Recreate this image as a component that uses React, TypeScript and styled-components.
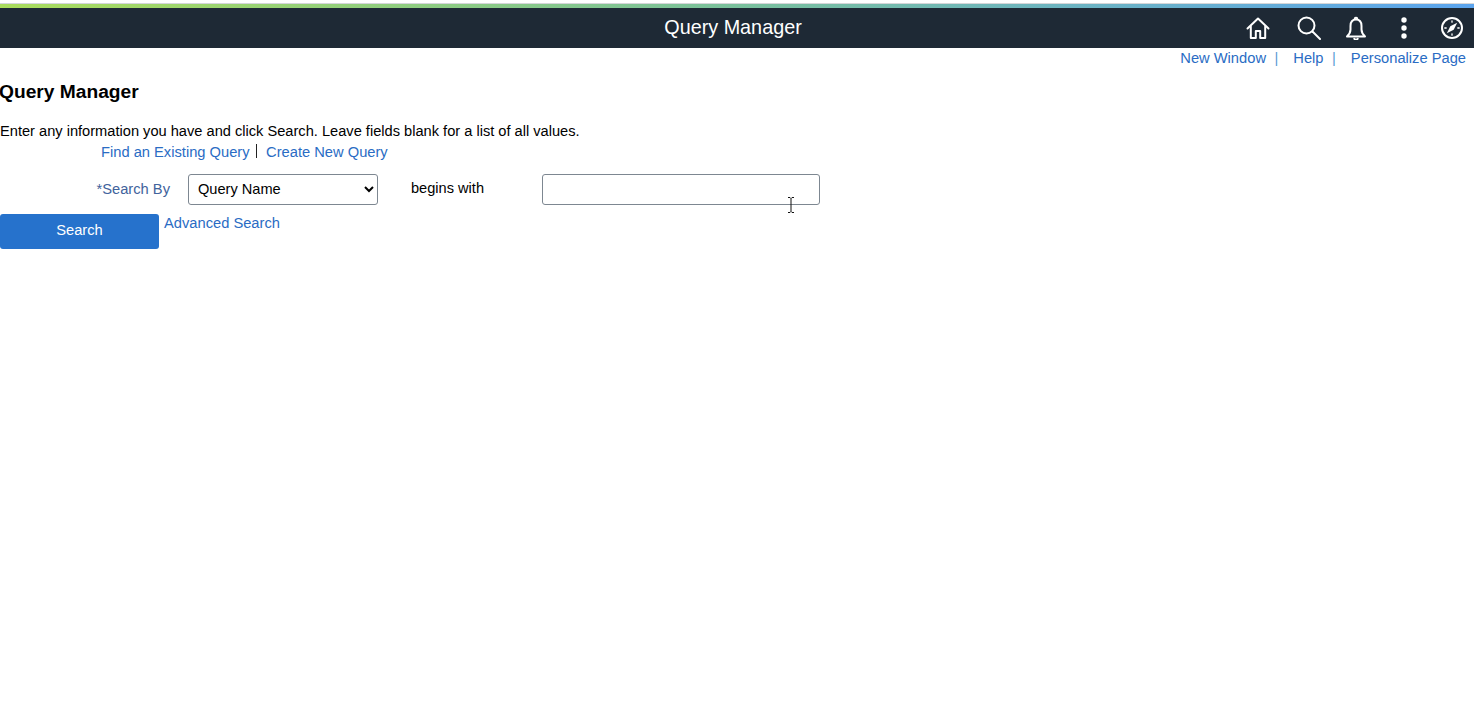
import React from "react";
import styled, { createGlobalStyle } from "styled-components";

const GlobalStyle = createGlobalStyle`
  html, body {
    margin: 0;
    padding: 0;
    background: #ffffff;
    font-family: "Liberation Sans", Arial, sans-serif;
    color: #000000;
  }
`;

const linkBlue = "#2a6cc4";

const Page = styled.div`
  position: relative;
  width: 1474px;
  height: 713px;
  overflow: hidden;
`;

const TopStrip = styled.div`
  height: 8px;
  box-sizing: border-box;
  padding-top: 3px;
`;

const StripLine = styled.div`
  height: 5px;
  box-sizing: border-box;
  border-top: 1px solid #d4d6d8;
  background: linear-gradient(90deg, #a9dc5c 0%, #79c09c 50%, #5ba4ee 100%);
  background-clip: padding-box;
`;

const Banner = styled.header`
  height: 40px;
  box-sizing: border-box;
  padding-right: 8px;
  display: grid;
  grid-template-columns: 1fr auto 1fr;
  align-items: center;
  background: #1e2935;
`;

const BannerTitle = styled.div`
  grid-column: 2;
  color: #ffffff;
  font-size: 19.8px;
  line-height: 38px;
  height: 40px;
`;

const BannerIcons = styled.div`
  grid-column: 3;
  justify-self: end;
  display: flex;
  align-items: center;
  margin-right: 2px;
`;

const IconSlot = styled.span<{ $gap?: number }>`
  margin-left: ${(p) => p.$gap ?? 0}px;
  height: 40px;
  display: flex;
  align-items: center;
`;

const UtilityLinks = styled.nav`
  display: flex;
  justify-content: flex-end;
  padding-right: 8px;
  height: 20px;
  font-size: 14.7px;
  line-height: 20px;
`;

const UtilityLink = styled.a<{ $gap?: number }>`
  color: ${linkBlue};
  margin-left: ${(p) => p.$gap ?? 0}px;
`;

const UtilitySep = styled.span`
  color: #5b9bd5;
  margin-left: 8.5px;
`;

const Heading = styled.h1`
  margin: 12px 0 0 -1px;
  font-size: 19.2px;
  line-height: 23px;
  font-weight: 700;
`;

const Instructions = styled.p`
  margin: 18px 0 0;
  font-size: 14.63px;
  line-height: 20px;
`;

const TabLinks = styled.div`
  display: flex;
  align-items: center;
  margin-top: 1px;
  padding-left: 101px;
  font-size: 14.7px;
  line-height: 20px;
`;

const QueryLink = styled.a`
  color: ${linkBlue};
`;

const TabSep = styled.span`
  width: 1.5px;
  height: 14px;
  margin: -2px 9px 0 6px;
  background: #222222;
`;

const SearchRow = styled.div`
  display: flex;
  align-items: center;
  margin-top: 12px;
  height: 31px;
`;

const SearchByLabel = styled.label`
  width: 170px;
  box-sizing: border-box;
  text-align: right;
  color: #41639c;
  font-size: 14.7px;
  line-height: 31px;
  height: 31px;
`;

const QuerySelect = styled.select`
  width: 190px;
  height: 31px;
  margin-left: 18px;
  padding: 0 0 2px 5px;
  box-sizing: border-box;
  border: 1px solid #7d8791;
  border-radius: 3px;
  background: #ffffff;
  color: #000000;
  font-family: inherit;
  font-size: 14.6px;
`;

const Operator = styled.span`
  width: 131px;
  height: 31px;
  margin-left: 33px;
  font-size: 14.6px;
  line-height: 29px;
`;

const SearchInput = styled.input`
  width: 278px;
  height: 31px;
  box-sizing: border-box;
  border: 1px solid #7d8791;
  border-radius: 3px;
  background: #ffffff;
`;

const ActionRow = styled.div`
  display: flex;
  align-items: flex-start;
  margin-top: 9px;
`;

const SearchButton = styled.button`
  width: 159px;
  height: 35px;
  padding: 0 0 4px;
  border: none;
  border-radius: 3px;
  background: #2672cc;
  color: #ffffff;
  font-family: inherit;
  font-size: 14.7px;
`;

const AdvancedLink = styled.a`
  margin-left: 5px;
  color: ${linkBlue};
  font-size: 14.7px;
  line-height: 18px;
`;

const TextCursor = styled.svg`
  position: absolute;
  left: 787px;
  top: 197px;
`;

const iconProps = {
  fill: "none",
  stroke: "#ffffff",
  strokeLinecap: "round" as const,
  strokeLinejoin: "round" as const,
};

export default function App() {
  return (
    <Page>
      <GlobalStyle />
      <TopStrip>
        <StripLine />
      </TopStrip>
      <Banner>
        <BannerTitle>Query Manager</BannerTitle>
        <BannerIcons>
          <IconSlot>
            <svg width="24" height="24" viewBox="0 0 24 24" {...iconProps} strokeWidth="2">
              <path d="M1.5 12.5 12 2.500l10.500 10" />
              <path d="M4.800 10.500V22h5v-7h4.400v7h5V10.500" />
            </svg>
          </IconSlot>
          <IconSlot $gap={27}>
            <svg width="24" height="24" viewBox="0 0 24 24" {...iconProps} strokeWidth="2">
              <circle cx="9.500" cy="9.500" r="8" />
              <path d="m15.500 15.500 7.500 7.500" />
            </svg>
          </IconSlot>
          <IconSlot $gap={23}>
            <svg width="24" height="24" viewBox="0 0 24 24" {...iconProps} strokeWidth="2">
              <path d="M12 3.500c-3.600 0-5.500 2.700-5.500 6.500v3.500c0 2.800-1.500 5-3.500 7h18c-2-2-3.500-4.200-3.500-7V10c0-3.800-1.900-6.500-5.500-6.500Z" />
              <path d="M10.800 2.500a1.300 1.300 0 0 1 2.400 0" />
              <path d="M10.300 22.800a2 2 0 0 0 3.400 0" />
            </svg>
          </IconSlot>
          <IconSlot $gap={32}>
            <svg width="8" height="22" viewBox="0 0 8 22" fill="#ffffff">
              <circle cx="4" cy="3" r="2.700" />
              <circle cx="4" cy="11" r="2.700" />
              <circle cx="4" cy="19" r="2.700" />
            </svg>
          </IconSlot>
          <IconSlot $gap={32}>
            <svg width="24" height="24" viewBox="0 0 24 24" {...iconProps} strokeWidth="2">
              <circle cx="12" cy="12" r="10" />
              <path d="M17.200 6.800 13.700 13.700 6.800 17.200 10.300 10.300Z" fill="#ffffff" stroke="none" />
              <path d="M12 4.800v1.400M19.200 12h-1.400M12 19.200v-1.400M4.800 12h1.400" strokeWidth="1.300" />
            </svg>
          </IconSlot>
        </BannerIcons>
      </Banner>

      <UtilityLinks>
        <UtilityLink>New Window</UtilityLink>
        <UtilitySep>|</UtilitySep>
        <UtilityLink $gap={15}>Help</UtilityLink>
        <UtilitySep>|</UtilitySep>
        <UtilityLink $gap={15}>Personalize Page</UtilityLink>
      </UtilityLinks>

      <Heading>Query Manager</Heading>
      <Instructions>
        Enter any information you have and click Search. Leave fields blank for a list of all values.
      </Instructions>

      <TabLinks>
        <QueryLink>Find an Existing Query</QueryLink>
        <TabSep />
        <QueryLink>Create New Query</QueryLink>
      </TabLinks>

      <SearchRow>
        <SearchByLabel>*Search By</SearchByLabel>
        <QuerySelect defaultValue="Query Name">
          <option>Query Name</option>
          <option>Description</option>
          <option>Access Group Name</option>
        </QuerySelect>
        <Operator>begins with</Operator>
        <SearchInput type="text" />
      </SearchRow>

      <ActionRow>
        <SearchButton type="button">Search</SearchButton>
        <AdvancedLink>Advanced Search</AdvancedLink>
      </ActionRow>

      <TextCursor width="8" height="16" viewBox="0 0 8 16" fill="none" stroke="#111111" strokeWidth="1">
        <path d="M1 .5h2l1 1 1-1h2M4 1.500v13M1 15.500h2l1-1 1 1h2" />
      </TextCursor>
    </Page>
  );
}
